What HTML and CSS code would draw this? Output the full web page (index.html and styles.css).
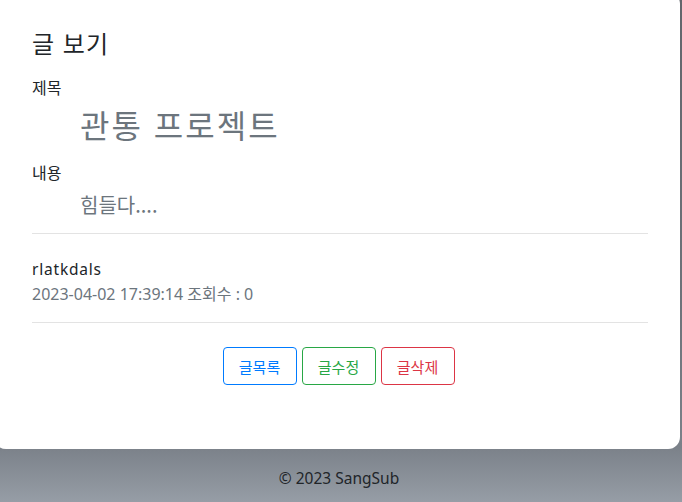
FILE: index.html
```html
<!DOCTYPE html>
<html lang="ko">
<head>
<meta charset="utf-8">
<title>글 보기</title>
<link rel="stylesheet" href="styles.css">
</head>
<body>
<div class="page">
  <main class="card">
    <h4 class="title">글 보기</h4>
    <div class="label">제목</div>
    <div class="subject">관통 프로젝트</div>
    <div class="label label-content">내용</div>
    <div class="content">힘들다....</div>
    <hr class="rule">
    <div class="meta">
      <div class="author">rlatkdals</div>
      <div class="info">2023-04-02 17:39:14 조회수 : 0</div>
    </div>
    <hr class="rule rule-bottom">
    <div class="actions">
      <button class="btn btn-blue">글목록</button>
      <button class="btn btn-green">글수정</button>
      <button class="btn btn-red">글삭제</button>
    </div>
  </main>
  <footer class="footer">© 2023 SangSub</footer>
</div>
</body>
</html>
```
FILE: styles.css
```css
html, body {
  margin: 0;
  padding: 0;
  height: 100%;
}
body {
  font-family: "Segoe UI", "Noto Sans", "Noto Sans CJK KR", sans-serif;
  color: #212529;
  background: linear-gradient(to bottom, #62666c 0%, #6e737a 60%, #7b8189 89%, #969da6 100%);
  overflow: hidden;
}
.page {
  display: flex;
  flex-direction: column;
  height: 502px;
}
.card {
  box-sizing: border-box;
  width: 686px;
  height: 457px;
  margin: -8px 0 0 -6px;
  padding: 36px 32px 0 38px;
  background: #fff;
  border-radius: 12px;
  display: flex;
  flex-direction: column;
}
.title {
  margin: 0;
  font-size: 24px;
  font-weight: 400;
  line-height: 29px;
  letter-spacing: 1px;
  font-family: "Noto Sans CJK KR", sans-serif;
}
.label {
  margin-top: 18px;
  font-size: 16px;
  line-height: 24px;
  font-family: "Noto Sans CJK KR", sans-serif;
}
.label-content {
  margin-top: 17px;
}
.subject {
  margin: 6px 0 0 48px;
  font-size: 32px;
  line-height: 38px;
  letter-spacing: 2px;
  color: #6c757d;
  font-family: "Noto Sans CJK KR", sans-serif;
}
.content {
  margin: 9px 0 0 48px;
  font-size: 20px;
  line-height: 24px;
  color: #6c757d;
  font-family: "Noto Sans CJK KR", sans-serif;
}
.rule {
  width: 100%;
  margin: 16px 0 0;
  border: 0;
  border-top: 1px solid #e3e3e3;
}
.meta {
  margin-top: 23px;
  font-size: 16px;
  line-height: 25px;
}
.author {
  font-size: 15.5px;
  letter-spacing: 0.8px;
}
.info {
  color: #6c757d;
}
.rule-bottom {
  margin-top: 15px;
}
.actions {
  margin-top: 24px;
  display: flex;
  justify-content: center;
  gap: 5px;
  padding-right: 3px;
}
.btn {
  box-sizing: border-box;
  width: 74px;
  height: 38px;
  padding: 0;
  background: #fff;
  border: 1px solid;
  border-radius: 4px;
  font-family: "Noto Sans CJK KR", sans-serif;
  font-size: 15px;
}
.btn-blue { color: #007bff; border-color: #007bff; }
.btn-green { color: #28a745; border-color: #28a745; }
.btn-red { color: #dc3545; border-color: #dc3545; }
.footer {
  flex: 1;
  display: flex;
  align-items: center;
  justify-content: center;
  font-size: 15.5px;
  color: #212529;
  padding-right: 4px;
  padding-top: 4px;
}
```
